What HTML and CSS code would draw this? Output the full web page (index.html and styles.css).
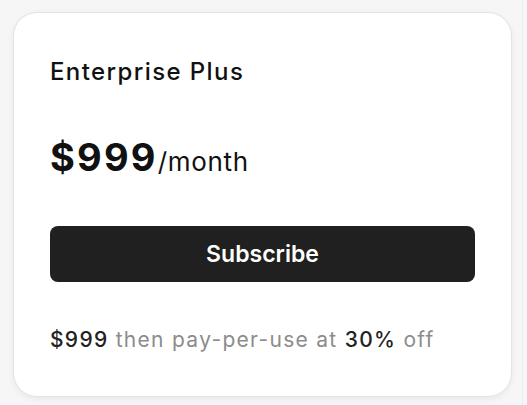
FILE: index.html
```html
<!DOCTYPE html>
<html>
<head>
<meta charset="utf-8">
<link rel="stylesheet" href="styles.css">
</head>
<body>
<div class="page">
  <div class="card">
    <h2 class="title">Enterprise Plus</h2>
    <div class="price"><span class="amount">$999</span><span class="period">/month</span></div>
    <button class="subscribe">Subscribe</button>
    <p class="note"><span class="strong">$999</span> then pay-per-use at <span class="strong">30%</span> off</p>
  </div>
</div>
</body>
</html>
```
FILE: styles.css
```css
html, body {
  margin: 0;
  padding: 0;
}
body {
  background: #f6f6f6;
  font-family: Inter, "Noto Sans", sans-serif;
  width: 527px;
  height: 405px;
  overflow: hidden;
}
.page {
  width: 523px;
  height: 405px;
  border-right: 1px solid #ececec;
  padding: 12px 0 0 13px;
  box-sizing: border-box;
}
.card {
  width: 499px;
  height: 385px;
  box-sizing: border-box;
  background: #fff;
  border: 1px solid #e4e4e4;
  border-radius: 24px;
  box-shadow: 0 2px 6px rgba(0,0,0,0.06);
  padding: 44px 36px 0 36px;
  display: flex;
  flex-direction: column;
}
.title {
  margin: 0;
  font-size: 24px;
  font-weight: 500;
  letter-spacing: 1.4px;
  line-height: 30px;
  color: #111;
}
.price {
  margin-top: 48px;
  height: 44px;
  display: flex;
  align-items: baseline;
  color: #111;
}
.amount {
  font-size: 38px;
  font-weight: 700;
  letter-spacing: 2.2px;
  line-height: 44px;
}
.period {
  font-size: 26px;
  font-weight: 400;
  letter-spacing: 0.7px;
}
.subscribe {
  margin-top: 47px;
  flex: none;
  height: 56px;
  width: 100%;
  border: none;
  border-radius: 8px;
  background: #202020;
  color: #fff;
  font-family: Inter, "Noto Sans", sans-serif;
  font-size: 23px;
  font-weight: 600;
  padding: 0;
}
.note {
  margin: 44px 0 0 0;
  font-size: 21px;
  letter-spacing: 1.3px;
  line-height: 28px;
  color: #8c8c8c;
}
.strong {
  color: #222;
  font-weight: 500;
}
```
